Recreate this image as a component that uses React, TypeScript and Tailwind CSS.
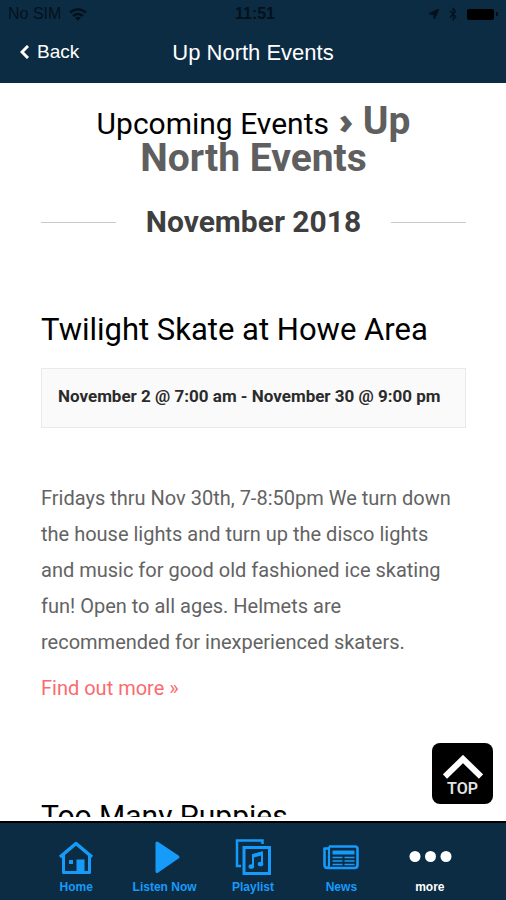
import type { ReactNode } from "react";
import { FaBluetoothB, FaLocationArrow } from "react-icons/fa";

type Tab = {
  label: string;
  icon: ReactNode;
  active?: boolean;
};

const tabs: Tab[] = [
  { label: "Home", icon: <HomeIcon /> },
  { label: "Listen Now", icon: <PlayIcon /> },
  { label: "Playlist", icon: <PlaylistIcon /> },
  { label: "News", icon: <NewsIcon /> },
  { label: "more", icon: <MoreIcon />, active: true },
];

function HomeIcon() {
  return (
    <svg viewBox="0 0 36 36" className="h-9 w-9" fill="none" stroke="currentColor">
      <path d="M2 18 18 4.500 34 18" strokeWidth="3.500" strokeLinejoin="round" />
      <path d="M5.500 16v17.500h26V16" strokeWidth="3" strokeLinejoin="round" />
      <path d="M18.500 20.500h8V33h-8zM11 21h4v4h-4z" fill="currentColor" stroke="none" />
    </svg>
  );
}

function PlayIcon() {
  return (
    <svg viewBox="0 0 36 36" className="h-9 w-9" fill="currentColor">
      <path
        d="M10 4v28.500L31 18z"
        stroke="currentColor"
        strokeWidth="3"
        strokeLinejoin="round"
      />
    </svg>
  );
}

function PlaylistIcon() {
  return (
    <svg viewBox="0 0 36 36" className="h-9 w-9" fill="none" stroke="currentColor">
      <path d="M6 27H2V1.500h25.500V5" strokeWidth="2.500" />
      <path d="M9 8.500h25.500v26H9z" strokeWidth="3" />
      <path d="M18 27V16l9-2.500v11" strokeWidth="2" />
      <path d="M17.500 17l10-2.800" strokeWidth="3.500" />
      <ellipse cx="16.300" cy="27.500" rx="2.800" ry="2.300" fill="currentColor" stroke="none" />
      <ellipse cx="25.500" cy="25" rx="2.800" ry="2.300" fill="currentColor" stroke="none" />
    </svg>
  );
}

function NewsIcon() {
  return (
    <svg viewBox="0 0 36 36" className="h-9 w-9" fill="none" stroke="currentColor">
      <path
        d="M6 7.500h26q2.500 0 2.500 2.500v16q0 3-3 3H4.500q-3 0-3-3V9.500H6"
        strokeWidth="2.600"
        strokeLinejoin="round"
      />
      <path d="M6 7.500V26q0 2-1.500 3" strokeWidth="2.200" />
      <path d="M9.500 13.500h22" strokeWidth="4" />
      <path d="M9.500 18.500h10M9.500 22h10M9.500 25.500h10M21.500 18.500h10M21.500 22h10M21.500 25.500h10" strokeWidth="1.700" />
    </svg>
  );
}

function MoreIcon() {
  return (
    <svg viewBox="0 0 44 36" className="h-9 w-11" fill="currentColor">
      <circle cx="7" cy="17.500" r="5.500" />
      <circle cx="22.500" cy="17.500" r="5.500" />
      <circle cx="38" cy="17.500" r="5.500" />
    </svg>
  );
}

function StatusBar() {
  return (
    <div className="grid grid-cols-3 items-center h-7 px-2 text-[16px] text-[#04111c]">
      <div className="flex items-center gap-2">
        <span>No SIM</span>
        <svg viewBox="0 0 18 13" className="h-[13px] w-[18px]" fill="none" stroke="currentColor">
          <path d="M1 4.500q8-6.500 16 0" strokeWidth="2.400" />
          <path d="M4 8q5-4 10 0" strokeWidth="2.400" />
          <path d="M9 13 6 9.800q3-2 6 0z" fill="currentColor" stroke="none" />
        </svg>
      </div>
      <span className="pl-1 text-center font-bold">11:51</span>
      <div className="flex items-center justify-end gap-2">
        <FaLocationArrow className="h-[10px] w-[10px]" />
        <FaBluetoothB className="h-[14px] w-[12px]" />
        <div className="flex items-center gap-0.5">
          <div className="h-[11px] w-[27px] rounded-xs bg-black" />
          <div className="h-1 w-0.5 bg-[#04111c]" />
        </div>
      </div>
    </div>
  );
}

function Header() {
  return (
    <header className="bg-[#0c2c44] pb-[7px] font-['Liberation_Sans',Arial,sans-serif]">
      <StatusBar />
      <div className="grid grid-cols-[1fr_auto_1fr] items-center h-12 px-5 text-white">
        <button className="flex items-center gap-2 justify-self-start text-[19px]">
          <svg viewBox="0 0 9 14" className="h-[14px] w-[9px]" fill="none" stroke="currentColor">
            <path d="M8 1 2 7l6 6" strokeWidth="3" />
          </svg>
          Back
        </button>
        <h1 className="text-[22px]">Up North Events</h1>
      </div>
    </header>
  );
}

export default function App() {
  return (
    <div className="flex flex-col h-screen bg-white font-['Roboto',sans-serif]">
      <Header />
      <main className="relative flex-1 min-h-0 pb-1">
        <div className="h-full overflow-hidden pl-[41px] pr-10">
          <h2 className="px-10 pt-5 text-center text-[39px] leading-[35px] font-bold text-[#5f5f5f]">
            <a href="#upcoming" className="text-[30px] font-normal text-black">
              Upcoming Events
            </a>{" "}
            <span className="font-['Open_Sans',sans-serif] text-[36px] leading-none font-extrabold">
              ›
            </span>{" "}
            Up North Events
          </h2>
          <div className="flex items-center gap-[30px] mt-[26px]">
            <div className="h-px flex-1 bg-[#c8c8c8]" />
            <h3 className="text-[30px] leading-10 font-bold text-[#3f3f3f]">November 2018</h3>
            <div className="h-px flex-1 bg-[#c8c8c8]" />
          </div>

          <article className="mt-[68px]">
            <h3 className="text-[31px] leading-10 text-black">Twilight Skate at Howe Area</h3>
            <p className="mt-[18px] border border-[#e9e9e9] bg-[#fafafa] px-4 pt-[14px] pb-[18px] text-[17px] leading-[26px] font-bold text-[#2b2b2b]">
              November 2 @ 7:00 am - November 30 @ 9:00 pm
            </p>
            <p className="mt-[52px] text-[20px] leading-9 text-[#636363]">
              Fridays thru Nov 30th, 7-8:50pm We turn down the house lights and turn up the
              disco lights and music for good old fashioned ice skating fun! Open to all ages.
              Helmets are recommended for inexperienced skaters.
            </p>
            <a href="#more" className="block mt-3 text-[20px] leading-8 text-[#fb6a6e]">
              Find out more »
            </a>
          </article>

          <article className="mt-[92px]">
            <h3 className="text-[30px] leading-10 text-black">Too Many Puppies</h3>
          </article>
        </div>
        <button className="absolute right-[13px] bottom-[17px] flex flex-col items-center h-[61px] w-[61px] rounded-lg bg-black pt-3 text-[16px] leading-5 font-semibold text-[#e4e4e4]">
          <svg viewBox="0 0 40 24" className="h-6 w-10" fill="none" stroke="white">
            <path d="M2 21.500 20 4l18 17.500" strokeWidth="6" />
          </svg>
          TOP
        </button>
      </main>
      <nav className="grid grid-cols-5 border-t-2 border-black bg-[#0c2c44] px-8 pt-4 pb-[3px] font-['Liberation_Sans',Arial,sans-serif]">
        {tabs.map((tab) => (
          <button
            key={tab.label}
            className={`flex flex-col items-center gap-0.5 text-[12px] leading-5 font-bold ${
              tab.active ? "text-white" : "text-[#169bfa]"
            }`}
          >
            {tab.icon}
            {tab.label}
          </button>
        ))}
      </nav>
    </div>
  );
}
